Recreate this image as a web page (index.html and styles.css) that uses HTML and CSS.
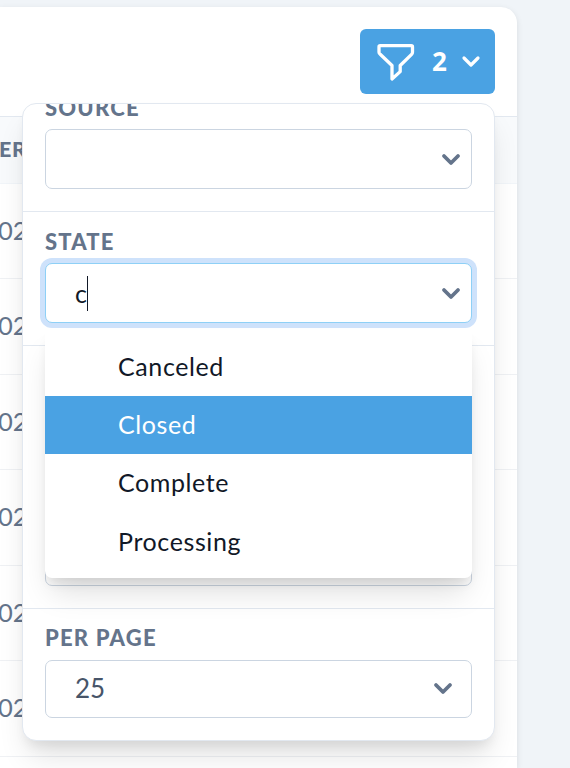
FILE: index.html
```html
<!DOCTYPE html>
<html lang="en">
<head>
<meta charset="utf-8">
<title>Filters</title>
<link rel="stylesheet" href="styles.css">
</head>
<body>
<main class="card">
  <div class="toolbar">
    <button class="filter-button">
      <svg class="funnel" width="38" height="38" viewBox="0 0 38 38"><path d="M3.2 1.7H34.3Q35.5 1.7 35.5 2.9V8.2Q35.5 9.4 34.6 10.3L23.2 21.5V27.6L15 35V21.5L3.2 10.3Q2 9.4 2 8.2V2.9Q2 1.7 3.2 1.7Z"/></svg>
      <span class="count">2</span>
      <svg class="chevron" width="20" height="14" viewBox="0 0 20 14"><path d="M3 3l7 7 7-7"/></svg>
    </button>
  </div>
  <div class="table">
    <div class="head">ER</div>
    <div class="row">02</div>
    <div class="row">02</div>
    <div class="row">02</div>
    <div class="row">02</div>
    <div class="row">02</div>
    <div class="row">02</div>
  </div>
</main>
<aside class="panel">
  <div class="scroller">
    <section class="section">
      <h3 class="label">SOURCE</h3>
      <div class="select"><svg class="chevron" width="20" height="14" viewBox="0 0 20 14"><path d="M3 3l7 7 7-7"/></svg></div>
    </section>
    <section class="section">
      <h3 class="label">STATE</h3>
      <div class="select focused"><span class="typed">c</span><svg class="chevron" width="20" height="14" viewBox="0 0 20 14"><path d="M3 3l7 7 7-7"/></svg></div>
    </section>
    <section class="section spacer"></section>
    <section class="section compact">
      <div class="select"></div>
    </section>
    <section class="section last">
      <h3 class="label">PER PAGE</h3>
      <div class="select short"><span class="value">25</span><svg class="chevron" width="20" height="14" viewBox="0 0 20 14"><path d="M3 3l7 7 7-7"/></svg></div>
    </section>
  </div>
  <ul class="menu">
    <li class="option">Canceled</li>
    <li class="option active">Closed</li>
    <li class="option">Complete</li>
    <li class="option">Processing</li>
  </ul>
</aside>
</body>
</html>
```
FILE: styles.css
```css
* { box-sizing: border-box; }
body {
  margin: 0;
  height: 768px;
  overflow: hidden;
  position: relative;
  padding-top: 7px;
  background: #f0f4f8;
  font-family: Lato, "Open Sans", sans-serif;
  color: #64748b;
}
.card {
  width: 517px;
  height: 761px;
  background: #fff;
  border-radius: 0 16px 0 0;
  box-shadow: 0 2px 6px rgba(0, 0, 0, .1);
}
.toolbar {
  height: 110px;
  padding: 22px 22px 0 0;
  display: flex;
  justify-content: flex-end;
  align-items: flex-start;
  border-bottom: 1px solid #e2e8f0;
}
.filter-button {
  width: 135px;
  height: 65px;
  padding: 0 14px 0 17px;
  border: 0;
  border-radius: 6px;
  background: #4aa2e3;
  color: #fff;
  display: flex;
  align-items: center;
  font: 700 26px/1 "Noto Sans", sans-serif;
}
.funnel { margin-top: 2px; }
.funnel path {
  fill: none;
  stroke: #fff;
  stroke-width: 3.3;
  stroke-linejoin: round;
}
.count { margin: -2px 0 0 17px; }
.filter-button .chevron { margin-left: auto; }
.chevron path {
  fill: none;
  stroke: #64748b;
  stroke-width: 3.8;
  stroke-linecap: round;
  stroke-linejoin: round;
}
.filter-button .chevron path { stroke: #fff; stroke-width: 3.2; }
.head {
  height: 67px;
  line-height: 65px;
  background: #f8fafc;
  border-bottom: 1px solid #f1f5f9;
  font-size: 21.5px;
  font-weight: 900;
  text-indent: -1px;
  letter-spacing: .6px;
}
.row {
  height: 95.5px;
  line-height: 92px;
  border-bottom: 1px solid #eff1f4;
  font-size: 25.5px;
  text-indent: -2px;
}
.head + .row { height: 95px; }
.panel {
  position: absolute;
  left: 22px;
  top: 103px;
  width: 473px;
  height: 638px;
  border: 1px solid #e2e8f0;
  border-radius: 14px;
  background: #fff;
  box-shadow: 0 20px 30px -6px rgba(0, 0, 0, .12), 0 8px 12px -4px rgba(0, 0, 0, .08);
}
.scroller {
  height: 100%;
  overflow: hidden;
  border-radius: 13px;
}
.section {
  height: 134px;
  padding: 0 22px;
  border-bottom: 1px solid #e2e8f0;
}
.section:first-child { margin-top: -26px; }
.section.spacer { border-color: transparent; }
.section.compact { height: 129px; padding-top: 46px; }
.section.last { border: 0; height: 131px; }
.label {
  margin: 0;
  height: 51px;
  line-height: 59px;
  font-size: 22px;
  font-weight: 900;
  letter-spacing: 1.2px;
}
.last .label { line-height: 57px; }
.select {
  height: 60px;
  padding: 0 10px 0 30px;
  border: 1px solid #cbd5e1;
  border-radius: 7px;
  background: #fff;
  display: flex;
  align-items: center;
}
.select .chevron { margin: 2px 0 0 auto; }
.focused {
  border-color: #8ed0f6;
  box-shadow: 0 0 0 5px #cee2fb;
  color: #111827;
}
.typed {
  height: 35px;
  line-height: 34px;
  font-size: 25px;
  margin-left: -1px;
  border-right: 1px solid #111827;
}
.short { height: 58px; padding-right: 18px; }
.short .chevron { margin-top: 0; }
.value {
  margin: -2px 0 0 -1px;
  font-size: 26px;
  color: #475569;
}
.menu {
  position: absolute;
  left: 22px;
  top: 225px;
  width: 427px;
  height: 249px;
  margin: 0;
  padding: 9px 0 7px;
  list-style: none;
  border-radius: 0 0 7px 7px;
  background: #fff;
  box-shadow: 0 20px 30px -6px rgba(0, 0, 0, .13), 0 8px 12px -4px rgba(0, 0, 0, .1);
}
.option {
  height: 58.2px;
  line-height: 56px;
  padding-left: 73px;
  font-size: 25px;
  letter-spacing: .6px;
  color: #111827;
}
.active { background: #4aa2e3; color: #fff; }
```
